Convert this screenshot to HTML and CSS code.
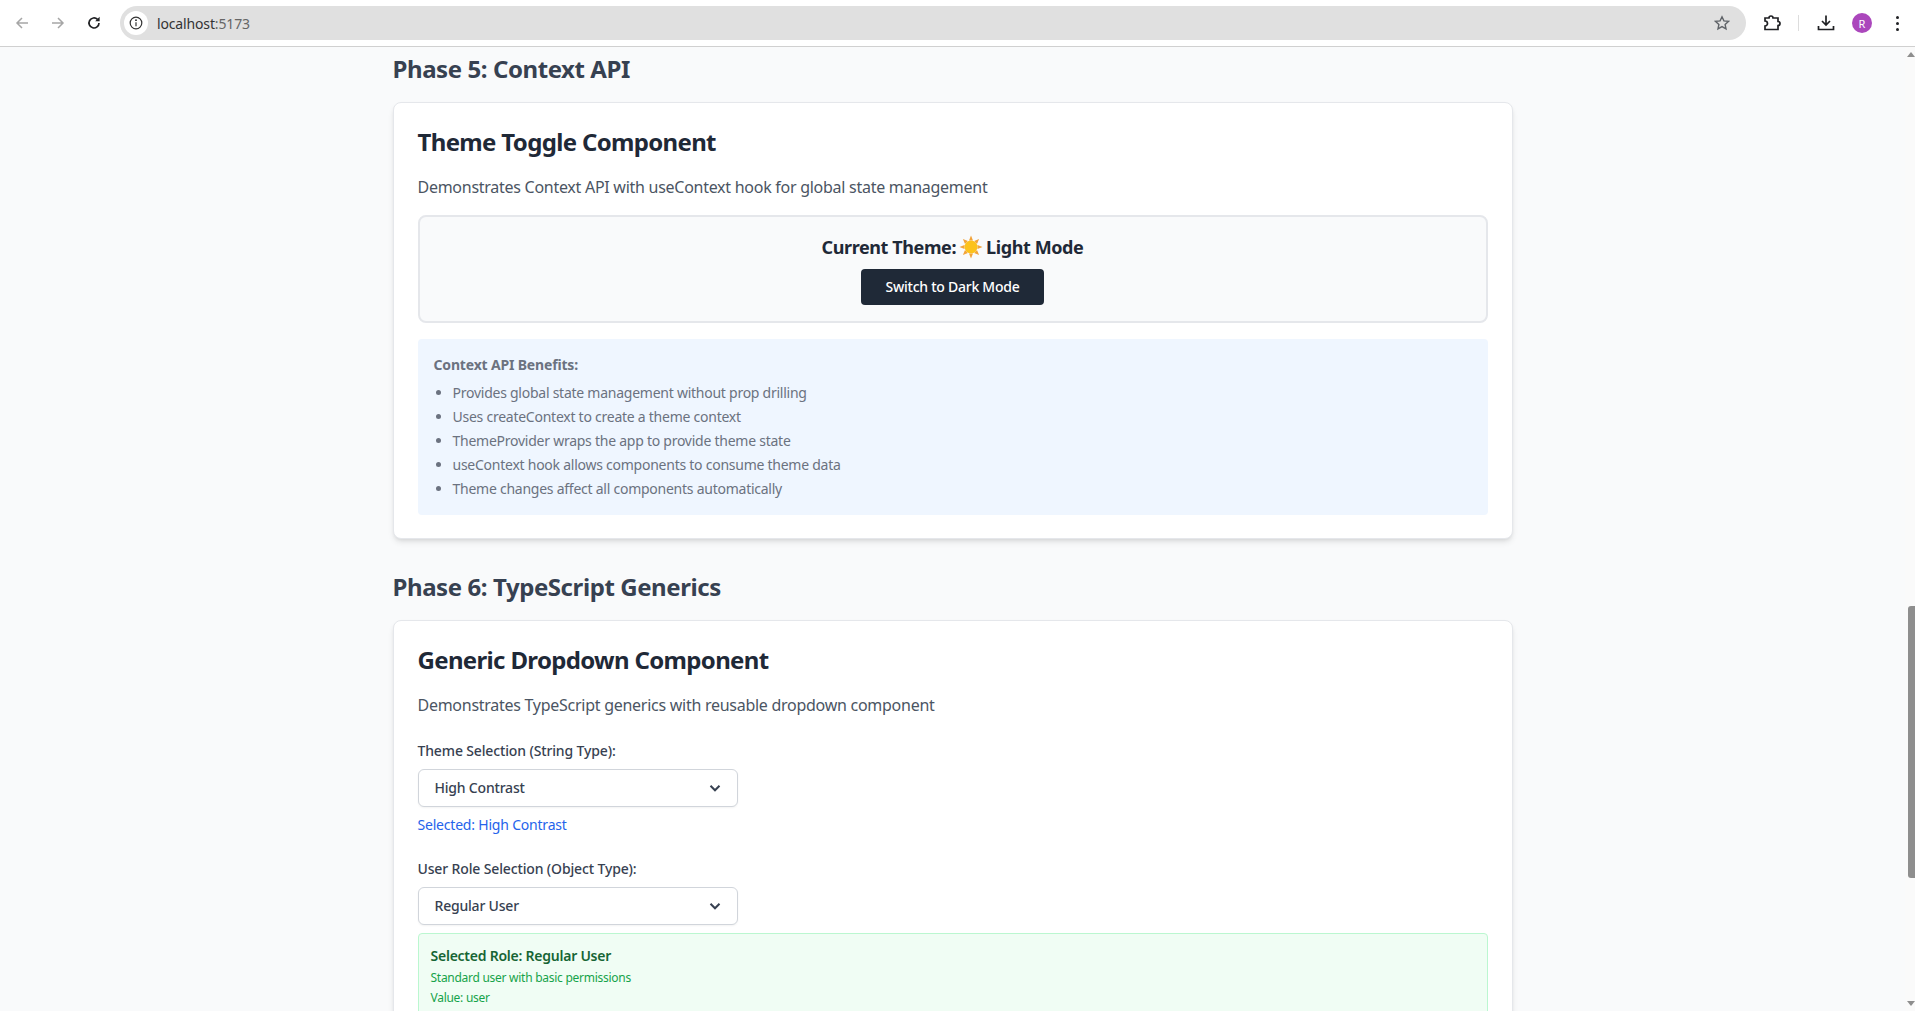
FILE: index.html

```html
<!DOCTYPE html>
<html lang="en">
<head>
  <meta charset="UTF-8" />
  <meta name="viewport" content="width=device-width, initial-scale=1.0" />
  <title>localhost:5173</title>
  <link rel="stylesheet" href="styles.css">
</head>
<body>

<div class="toolbar">
  <svg class="tool-icon" viewBox="0 0 16 16"><path d="M14 8H3M8 3L3 8l5 5" class="stroke-grey"/></svg>
  <svg class="tool-icon" viewBox="0 0 16 16"><path d="M2 8h11M8 3l5 5-5 5" class="stroke-grey"/></svg>
  <svg class="tool-icon" viewBox="0 0 16 16"><path d="M13 8a5 5 0 1 1-1.5-3.6" class="stroke-dark"/><path d="M13.6 1.8v4.4H9.2z" class="fill-dark"/></svg>
  <div class="url-pill">
    <span class="site-info">
      <svg viewBox="0 0 14 14" width="14" height="14"><circle cx="7" cy="7" r="5.8" class="thin-dark"/><path d="M7 6.2v4" class="thin-dark"/><circle cx="7" cy="4.2" r="0.9" class="fill-dark"/></svg>
    </span>
    <span class="url-host">localhost</span><span class="url-port">:5173</span>
    <svg class="star" viewBox="0 0 16 16" width="16" height="16"><path d="M8 1.8l1.9 4.1 4.5.5-3.3 3 .9 4.4L8 11.6l-4 2.2.9-4.4-3.3-3 4.5-.5z" class="thin-grey"/></svg>
  </div>
  <svg class="ext-icon" viewBox="0 0 18 18" width="18" height="18"><path d="M2 4h4a2 2 0 0 1 4 0h5v3.5a2 2 0 0 1 0 4V15.500H2v-3.500a2.500 2.500 0 0 0 0-5z" class="stroke-dark"/></svg>
  <span class="tool-divider"></span>
  <svg class="dl-icon" viewBox="0 0 18 18" width="18" height="18"><path d="M9 1.500v9M5 7l4 4 4-4" class="stroke-dark"/><path d="M1.500 12v3.500h15V12" class="stroke-dark"/></svg>
  <span class="avatar">R</span>
  <span class="menu-dots"><i></i><i></i><i></i></span>
</div>

<div class="viewport">
  <main class="page">

    <h2 class="phase-title">Phase 5: Context API</h2>
    <section class="card">
      <h3 class="card-title">Theme Toggle Component</h3>
      <p class="card-desc">Demonstrates Context API with useContext hook for global state management</p>
      <div class="theme-box">
        <p class="theme-current">Current Theme:
          <svg class="sun" viewBox="0 0 24 24" width="24" height="24">
            <g fill="#f2a33a">
              <path d="M12 0.500l2 5h-4zM12 23.500l-2-5h4zM0.500 12l5-2v4zM23.500 12l-5 2v-4z"/>
              <path d="M3.900 3.900l5 2.100-2.900 2.900zM20.100 20.100l-5-2.100 2.900-2.900zM3.900 20.100l2.100-5 2.900 2.900zM20.100 3.900l-2.100 5-2.900-2.900z"/>
            </g>
            <circle cx="12" cy="12" r="6.500" fill="#fcc21b"/>
          </svg>
          Light Mode</p>
        <button class="btn-dark">Switch to Dark Mode</button>
      </div>
      <div class="info-box">
        <h4 class="info-title">Context API Benefits:</h4>
        <ul class="info-list">
          <li>Provides global state management without prop drilling</li>
          <li>Uses createContext to create a theme context</li>
          <li>ThemeProvider wraps the app to provide theme state</li>
          <li>useContext hook allows components to consume theme data</li>
          <li>Theme changes affect all components automatically</li>
        </ul>
      </div>
    </section>

    <h2 class="phase-title phase-next">Phase 6: TypeScript Generics</h2>
    <section class="card">
      <h3 class="card-title">Generic Dropdown Component</h3>
      <p class="card-desc">Demonstrates TypeScript generics with reusable dropdown component</p>

      <label class="field-label label-first">Theme Selection (String Type):</label>
      <div class="dropdown">
        <span>High Contrast</span>
        <svg viewBox="0 0 12 12" width="12" height="12"><path d="M1.500 3.800L6 8.300l4.500-4.500" class="chevron"/></svg>
      </div>
      <p class="selected-note">Selected: High Contrast</p>

      <label class="field-label label-second">User Role Selection (Object Type):</label>
      <div class="dropdown">
        <span>Regular User</span>
        <svg viewBox="0 0 12 12" width="12" height="12"><path d="M1.500 3.800L6 8.300l4.500-4.500" class="chevron"/></svg>
      </div>
      <div class="role-box">
        <p class="role-name">Selected Role: Regular User</p>
        <p class="role-line">Standard user with basic permissions</p>
        <p class="role-line">Value: user</p>
      </div>
    </section>

  </main>

  <div class="scrollbar">
    <span class="arrow-up"></span>
    <div class="scroll-track"><div class="scroll-thumb"></div></div>
    <span class="arrow-down"></span>
  </div>
</div>

</body>
</html>
```

FILE: styles.css

```css
* { box-sizing: border-box; }
html, body { height: 100%; }
body { margin: 0; display: flex; flex-direction: column; overflow: hidden; background: #f9fafb; font-family: "Noto Sans", sans-serif; }
p, h2, h3, h4, ul { margin: 0; }

/* browser chrome */
.toolbar { height: 47px; flex: none; display: flex; align-items: center; padding-left: 14px; background: #fff; border-bottom: 1px solid #d0d0d0; }
.tool-icon { width: 16px; height: 16px; margin-right: 20px; flex: none; }
.tool-icon:nth-child(3) { margin-right: 18px; }
.stroke-grey { fill: none; stroke: #a6a6a6; stroke-width: 1.5; }
.stroke-dark { fill: none; stroke: #202124; stroke-width: 1.7; }
.thin-dark { fill: none; stroke: #333; stroke-width: 1.2; }
.thin-grey { fill: none; stroke: #5f6368; stroke-width: 1.4; }
.fill-dark { fill: #202124; }
.url-pill { width: 1626px; height: 34px; flex: none; display: flex; align-items: center; padding-left: 4px; border-radius: 17px; background: #e0e0e0; font-size: 14px; letter-spacing: -0.15px; }
.site-info { width: 24px; height: 24px; margin-right: 9px; display: flex; align-items: center; justify-content: center; border-radius: 50%; background: #fff; }
.url-host { color: #333; }
.url-port { color: #666; }
.star { margin-left: auto; margin-right: 16px; }
.ext-icon { margin-left: 17px; flex: none; }
.tool-divider { width: 1px; height: 16px; margin-left: 17px; background: #ddd; flex: none; }
.dl-icon { margin-left: 18px; flex: none; }
.avatar { width: 20px; height: 20px; margin-left: 17px; flex: none; display: flex; align-items: center; justify-content: center; border-radius: 50%; background: #ab47bc; color: #fff; font-size: 11px; }
.menu-dots { margin-left: 24px; display: flex; flex-direction: column; gap: 3px; }
.menu-dots i { width: 3px; height: 3px; border-radius: 50%; background: #202124; display: block; }

/* page */
.viewport { flex: 1; min-height: 0; display: flex; }
.page { flex: 1; min-width: 0; height: 100%; overflow: hidden; padding-top: 7px; display: flex; flex-direction: column; align-items: center; }
.phase-title { width: 1120px; flex: none; margin-bottom: 18px; font-size: 24px; line-height: 30px; font-weight: 700; letter-spacing: -0.42px; color: #374151; }
.phase-next { margin-top: 33px; }
.card { width: 1120px; flex: none; padding: 25px 24px 23px; background: #fff; border: 1px solid #e5e7eb; border-radius: 8px; box-shadow: 0 4px 6px -1px rgba(0,0,0,0.1), 0 2px 4px -2px rgba(0,0,0,0.1); }
.card-title { margin-bottom: 19px; font-size: 24px; line-height: 28px; font-weight: 700; letter-spacing: -0.66px; color: #1f2937; }
.card-desc { margin-bottom: 16px; font-size: 16px; line-height: 24px; letter-spacing: -0.27px; color: #4b5563; }

.theme-box { height: 108px; padding-top: 16px; display: flex; flex-direction: column; align-items: center; background: #f9fafb; border: 2px solid #e5e7eb; border-radius: 8px; }
.theme-current { display: flex; align-items: center; gap: 3px; margin-bottom: 8px; font-size: 18px; line-height: 28px; font-weight: 700; letter-spacing: -0.4px; color: #1f2937; }
.btn-dark { width: 183px; height: 36px; padding-bottom: 2px; border: none; border-radius: 4px; background: #1f2937; color: #fff; font-family: inherit; font-size: 14px; font-weight: 500; letter-spacing: -0.25px; }

.info-box { height: 176px; margin-top: 16px; padding: 16px; background: #eff6ff; border-radius: 4px; }
.info-title { margin-bottom: 6px; font-size: 14px; line-height: 20px; font-weight: 700; letter-spacing: -0.17px; color: #6b7280; }
.info-list { padding-left: 19px; font-size: 14px; line-height: 24px; letter-spacing: -0.25px; color: #6b7280; }

.field-label { display: block; margin-bottom: 8px; font-size: 14px; line-height: 20px; font-weight: 500; letter-spacing: -0.14px; color: #374151; }
.label-first { margin-top: 24px; }
.label-second { margin-top: 24px; }
.dropdown { width: 320px; height: 38px; padding: 0 17px 2px 16px; display: flex; align-items: center; justify-content: space-between; background: #fff; border: 1px solid #d1d5db; border-radius: 6px; box-shadow: 0 1px 2px rgba(0,0,0,0.05); font-size: 14px; font-weight: 500; letter-spacing: -0.2px; color: #374151; }
.dropdown svg { position: relative; top: 1px; left: 1px; }
.chevron { fill: none; stroke: #374151; stroke-width: 2; }
.selected-note { margin-top: 8px; font-size: 14px; line-height: 20px; letter-spacing: -0.2px; color: #2563eb; }

.role-box { margin-top: 8px; padding: 12px; background: #f0fdf4; border: 1px solid #bbf7d0; border-radius: 4px; }
.role-name { margin-bottom: 2px; font-size: 14px; line-height: 20px; font-weight: 600; letter-spacing: -0.24px; color: #166534; }
.role-line { font-size: 12px; line-height: 20px; letter-spacing: -0.27px; color: #16a34a; }

/* scrollbar */
.scrollbar { width: 10px; flex: none; display: flex; flex-direction: column; align-items: flex-end; background: #fafafa; }
.arrow-up, .arrow-down { width: 0; height: 0; flex: none; border-left: 4px solid transparent; border-right: 4px solid transparent; }
.arrow-up { margin: 5px 0 0; border-bottom: 5px solid #8e8e8e; }
.arrow-down { margin: 0 0 5px; border-top: 5px solid #8e8e8e; }
.scroll-track { flex: 1; width: 100%; padding-top: 549px; display: flex; justify-content: flex-end; }
.scroll-thumb { width: 7px; height: 272px; background: #8e8e8e; border-radius: 3px 0 0 3px; }
```
